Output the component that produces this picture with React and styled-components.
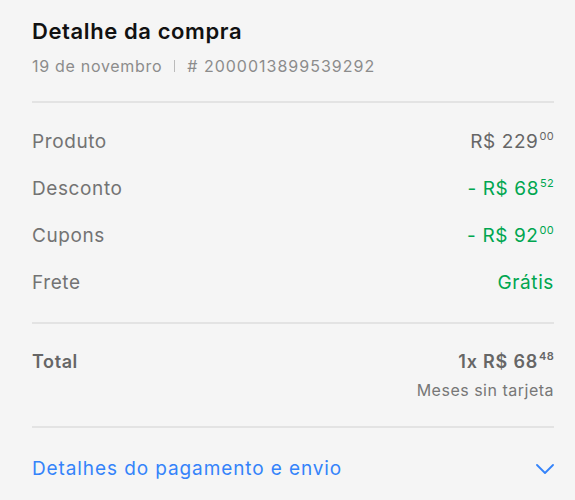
import React from "react";
import styled, { createGlobalStyle } from "styled-components";

const Global = createGlobalStyle`
  html, body { margin: 0; padding: 0; background: #f5f5f5; }
  body { font-family: Inter, "Liberation Sans", sans-serif; -webkit-font-smoothing: antialiased; }
`;

const Card = styled.div`
  width: 575px;
  height: 500px;
  box-sizing: border-box;
  padding: 16px 21px 0 32px;
  background: #f5f5f5;
  overflow: hidden;
`;

const Header = styled.div`
  display: flex;
  flex-direction: column;
  gap: 10px;
  padding-bottom: 25px;
`;

const Title = styled.h1`
  margin: 0;
  font-size: 22px;
  font-weight: 600;
  letter-spacing: 0.6px;
  color: #111;
  line-height: 30px;
`;

const Sub = styled.div`
  display: flex;
  align-items: center;
  gap: 12px;
  font-size: 16px;
  letter-spacing: 0.7px;
  color: #8c8c8c;
  line-height: 20px;
`;

const OrderNo = styled.span`
  letter-spacing: 1px;
`;

const Sep = styled.span`
  width: 1px;
  height: 12px;
  background: #bbb;
`;

const Divider = styled.hr`
  margin: 0;
  border: 0;
  height: 2px;
  background: #e3e3e3;
`;

const Rows = styled.div`
  display: flex;
  flex-direction: column;
  gap: 21px;
  padding: 26px 0 26px;
`;

const Row = styled.div`
  display: flex;
  justify-content: space-between;
  align-items: flex-start;
  font-size: 19px;
  letter-spacing: 0.6px;
  line-height: 26px;
`;

const Label = styled.span`
  color: ${(p) => (p.$strong ? "#666" : "#737373")};
  font-weight: ${(p) => (p.$strong ? 600 : 400)};
  font-size: ${(p) => (p.$strong ? "18px" : "inherit")};
`;

const Value = styled.span`
  color: ${(p) => (p.$green ? "#00a650" : "#666")};
  font-weight: ${(p) => (p.$strong ? 600 : 400)};
  font-size: ${(p) => (p.$strong ? "18px" : "inherit")};
  letter-spacing: ${(p) => (p.$strong ? "0.8px" : "inherit")};
  white-space: nowrap;
`;

const Cents = styled.sup`
  font-size: 11px;
  letter-spacing: 0.3px;
  vertical-align: 8px;
  line-height: 0;
  margin-left: 1px;
`;

const TotalBlock = styled.div`
  padding: 25px 0 26px;
`;

const RightCol = styled.div`
  display: flex;
  flex-direction: column;
  align-items: flex-end;
  gap: 5px;
`;

const Note = styled.span`
  font-size: 16px;
  letter-spacing: 0.5px;
  color: #777;
  line-height: 20px;
`;

const Toggle = styled.button`
  all: unset;
  box-sizing: border-box;
  width: 100%;
  display: flex;
  justify-content: space-between;
  align-items: center;
  padding: 28px 0;
  font-size: 19px;
  letter-spacing: 0.9px;
  line-height: 26px;
  color: #3483fa;
  font-family: inherit;
  cursor: pointer;
`;

const Price = ({ int, cents, minus }) => (
  <>
    {minus ? "- " : ""}R$ {int}
    <Cents>{cents}</Cents>
  </>
);

export default function App() {
  return (
    <>
      <Global />
      <Card>
        <Header>
          <Title>Detalhe da compra</Title>
          <Sub>
            <span>19 de novembro</span>
            <Sep />
            <OrderNo># 2000013899539292</OrderNo>
          </Sub>
        </Header>
        <Divider />
        <Rows>
          <Row>
            <Label>Produto</Label>
            <Value><Price int="229" cents="00" /></Value>
          </Row>
          <Row>
            <Label>Desconto</Label>
            <Value $green><Price minus int="68" cents="52" /></Value>
          </Row>
          <Row>
            <Label>Cupons</Label>
            <Value $green><Price minus int="92" cents="00" /></Value>
          </Row>
          <Row>
            <Label>Frete</Label>
            <Value $green>Grátis</Value>
          </Row>
        </Rows>
        <Divider />
        <TotalBlock>
          <Row>
            <Label $strong>Total</Label>
            <RightCol>
              <Value $strong>1x R$ 68<Cents>48</Cents></Value>
              <Note>Meses sin tarjeta</Note>
            </RightCol>
          </Row>
        </TotalBlock>
        <Divider />
        <Toggle>
          <span>Detalhes do pagamento e envio</span>
          <svg width="18" height="10" viewBox="0 0 18 10" fill="none">
            <path d="M1 1l8 8 8-8" stroke="#3483fa" strokeWidth="1.8" strokeLinecap="round" strokeLinejoin="round" />
          </svg>
        </Toggle>
      </Card>
    </>
  );
}
